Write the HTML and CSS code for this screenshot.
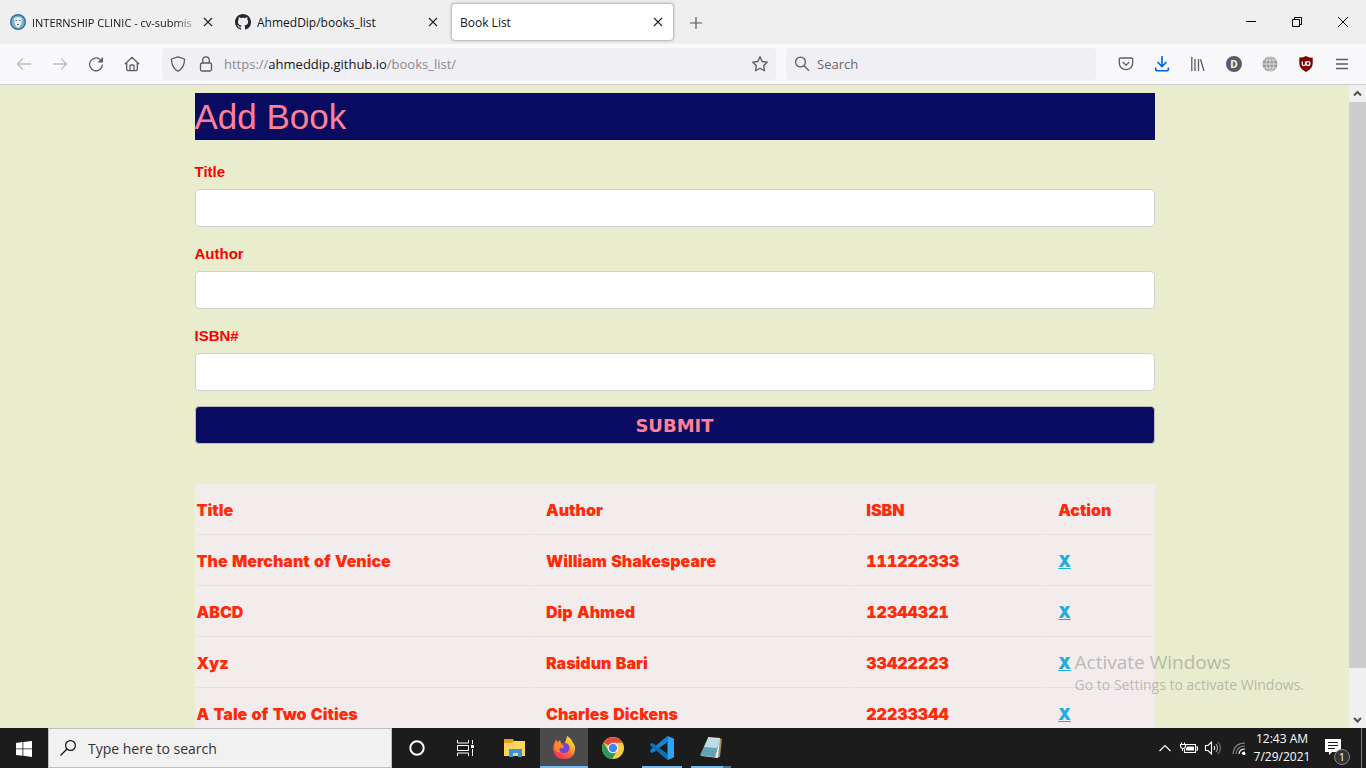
FILE: index.html
```html
<!DOCTYPE html>
<html lang="en">
<head>
<meta charset="utf-8">
<meta name="viewport" content="width=device-width, initial-scale=1">
<title>Book List</title>
<link rel="stylesheet" href="styles.css">
</head>
<body>
<div class="desktop">
  <header class="tabstrip">
    <div class="tab">
      <svg class="favicon" viewBox="0 0 16 16"><circle cx="8" cy="8" r="8" fill="#2f6f9a"/><circle cx="8" cy="8" r="6.6" fill="#78aeca"/><path d="M4 4.5Q8 1.500 12 4.500L11.500 9Q10.500 13 8 14Q5.500 13 4.500 9Z" fill="#e9eef0"/><path d="M5.500 6.500h1.500M9 6.500h1.500M7 10.500h2" stroke="#57656d"/></svg>
      <span class="tab-title tab-title-faded">INTERNSHIP CLINIC - cv-submis</span>
      <button class="tab-close" aria-label="Close tab"><svg viewBox="0 0 10 10"><path d="M1 1l8 8M9 1l-8 8" stroke="#222" stroke-width="1.1"/></svg></button>
    </div>
    <div class="tab">
      <svg class="favicon" viewBox="0 0 16 16"><path fill="#24292f" d="M8 0C3.580 0 0 3.580 0 8c0 3.540 2.290 6.530 5.470 7.590.4.070.55-.17.55-.38 0-.19-.010-.82-.010-1.490-2.010.37-2.530-.49-2.690-.94-.09-.23-.48-.94-.82-1.130-.28-.15-.68-.52-.010-.53.63-.010 1.080.58 1.230.82.72 1.210 1.870.87 2.330.66.070-.52.28-.87.51-1.070-1.780-.2-3.640-.89-3.640-3.950 0-.87.31-1.590.82-2.150-.08-.2-.36-1.020.08-2.120 0 0 .67-.21 2.200.82.64-.18 1.320-.27 2-.27s1.360.09 2 .27c1.530-1.040 2.200-.82 2.200-.82.44 1.100.16 1.920.08 2.120.51.56.82 1.270.82 2.150 0 3.070-1.870 3.750-3.650 3.950.29.25.54.73.54 1.480 0 1.070-.010 1.930-.010 2.200 0 .21.15.46.55.38A8 8 0 0 0 16 8c0-4.420-3.580-8-8-8z"/></svg>
      <span class="tab-title">AhmedDip/books_list</span>
      <button class="tab-close" aria-label="Close tab"><svg viewBox="0 0 10 10"><path d="M1 1l8 8M9 1l-8 8" stroke="#222" stroke-width="1.1"/></svg></button>
    </div>
    <div class="tab tab-active">
      <span class="tab-title">Book List</span>
      <button class="tab-close" aria-label="Close tab"><svg viewBox="0 0 10 10"><path d="M1 1l8 8M9 1l-8 8" stroke="#222" stroke-width="1.1"/></svg></button>
    </div>
    <button class="new-tab" aria-label="New tab"><svg width="12" height="12" viewBox="0 0 12 12"><path d="M6 0v12M0 6h12" stroke="#55555f" stroke-width="1.2"/></svg></button>
    <div class="window-controls">
      <button aria-label="Minimize"><svg width="10" height="10"><path d="M0 4.500h10" stroke="#000"/></svg></button>
      <button aria-label="Restore"><svg width="10" height="10" fill="none" stroke="#000"><path d="M.5 2.500h7v7h-7zM2.500 2.500v-2h7v7h-2"/></svg></button>
      <button aria-label="Close"><svg width="10" height="10"><path d="M0 0l10 10M10 0L0 10" stroke="#000"/></svg></button>
    </div>
  </header>

  <nav class="toolbar">
    <div class="tools">
      <button aria-label="Back"><svg class="faded" viewBox="0 0 16 16"><path d="M15 8H1.500M7 2.500L1.500 8 7 13.500"/></svg></button>
      <button aria-label="Forward"><svg class="faded" viewBox="0 0 16 16"><path d="M1 8h13.500M9 2.500L14.500 8 9 13.500"/></svg></button>
      <button aria-label="Reload"><svg viewBox="0 0 16 16"><path d="M14.400 8.500A6.400 6.400 0 1 1 12.300 3.600"/><path class="solid" d="M15 1v5.500H9.500z"/></svg></button>
      <button aria-label="Home"><svg viewBox="0 0 16 16"><path d="M.8 8.200L8 1.300l7.200 6.900M2.700 7v6.600q0 1.100 1.100 1.100h8.400q1.100 0 1.100-1.100V7M6 14.500V10q0-1 1-1h2q1 0 1 1v4.500"/></svg></button>
    </div>
    <div class="field address">
      <svg viewBox="0 0 16 16"><path d="M8 .8L14.500 3q.3 8-6.500 12.300Q1.200 11 1.500 3z" stroke-linejoin="round"/></svg>
      <svg viewBox="0 0 16 16"><rect x="2.500" y="7" width="11" height="8" rx="1.500"/><path d="M4.700 7V4.200a3.300 3.300 0 0 1 6.600 0V7"/></svg>
      <div class="url" role="textbox" aria-label="Address" contenteditable="true" spellcheck="false">https://<span class="host">ahmeddip.github.io</span>/books_list/</div>
      <svg viewBox="0 0 16 16"><path d="M8 .9l2.200 4.600 5 .7-3.600 3.500.9 5L8 12.300l-4.500 2.400.9-5L.8 6.200l5-.7z" stroke-linejoin="round"/></svg>
    </div>
    <div class="field websearch">
      <svg viewBox="0 0 16 16"><circle cx="6.500" cy="6" r="4.900"/><path d="M10 9.700l5 5"/></svg>
      <input type="text" aria-label="Web search" placeholder="Search">
    </div>
    <div class="tools">
      <button aria-label="Save to Pocket"><svg viewBox="0 0 16 16"><path d="M2.500 2h11q1.200 0 1.200 1.200V7a6.700 6.700 0 0 1-13.400 0V3.200Q1.300 2 2.500 2zM4.700 6L8 9.200 11.300 6"/></svg></button>
      <button aria-label="Downloads"><svg class="blue" viewBox="0 0 16 16"><path d="M8 0v10.500M3.500 6L8 10.500 12.500 6M1.700 11.500v2q0 1.200 1.200 1.200h10.200q1.200 0 1.200-1.200v-2"/></svg></button>
      <button aria-label="Library"><svg viewBox="0 0 16 16"><path d="M1.800 1v14M5 3v12M8.500 3v12M10.500 3.300L14 15"/></svg></button>
      <button aria-label="Account" class="account"><span>D</span></button>
      <button aria-label="Translate"><svg viewBox="0 0 16 16"><circle cx="8" cy="8" r="7.500" fill="#999" stroke="none"/><g stroke="#ddd" stroke-width="1"><ellipse cx="8" cy="8" rx="3.800" ry="7.500"/><path d="M8 0v16M0 8h16M1 4h14M1 12h14"/></g></svg></button>
      <button aria-label="uBlock Origin"><svg viewBox="0 0 16 16"><path d="M8 0l1.500.8q2.500 1 5.200.8v6q0 5-6.700 8.400Q1.300 12.600 1.300 7.600v-6Q5 1.800 8 0z" fill="#800000" stroke="none"/><path d="M4.300 5.500v2.700q0 1.400 1.600 1.400T7.500 8.200V5.500" stroke="#fff"/><circle cx="10" cy="7.600" r="1.900" stroke="#fff"/></svg></button>
      <button aria-label="Menu"><svg viewBox="0 0 16 16"><path d="M2 3.500h12M2 8h12M2 12.500h12"/></svg></button>
    </div>
  </nav>

  <div class="viewport">
    <main class="page">
      <div class="container">
        <h1>Add Book</h1>
        <form>
          <label for="title">Title</label>
          <input type="text" id="title">
          <label for="author">Author</label>
          <input type="text" id="author">
          <label for="isbn">ISBN#</label>
          <input type="text" id="isbn">
          <button type="button" class="submit">SUBMIT</button>
        </form>
        <table class="books">
          <colgroup><col class="col-title"><col class="col-author"><col class="col-isbn"><col class="col-action"></colgroup>
          <thead>
            <tr><th>Title</th><th>Author</th><th>ISBN</th><th>Action</th></tr>
          </thead>
          <tbody>
            <tr><td>The Merchant of Venice</td><td>William Shakespeare</td><td>111222333</td><td><a href="#">X</a></td></tr>
            <tr><td>ABCD</td><td>Dip Ahmed</td><td>12344321</td><td><a href="#">X</a></td></tr>
            <tr><td>Xyz</td><td>Rasidun Bari</td><td>33422223</td><td><a href="#">X</a></td></tr>
            <tr><td>A Tale of Two Cities</td><td>Charles Dickens</td><td>22233344</td><td><a href="#">X</a></td></tr>
          </tbody>
        </table>
      </div>
    </main>
    <div class="scrollbar">
      <svg viewBox="0 0 17 17"><path d="M5 10.500L8.500 7l3.500 3.500"/></svg>
      <div class="track"><div class="thumb"></div></div>
      <svg viewBox="0 0 17 17"><path d="M5 7l3.500 3.500L12 7"/></svg>
    </div>
    <div class="watermark">
      <p class="watermark-title">Activate Windows</p>
      <p>Go to Settings to activate Windows.</p>
    </div>
  </div>

  <footer class="taskbar">
    <button class="start" aria-label="Start"><svg width="16" height="16" viewBox="0 0 16 16"><path fill="#fff" d="M0 2l6.500-.9v6.400H0zM7.300 1L16 0v7.500H7.300zM0 8.300h6.500v6.400L0 13.900zM7.300 8.300H16V16l-8.700-1.200z"/></svg></button>
    <div class="task-search">
      <svg width="16" height="16" viewBox="0 0 16 16"><circle cx="10.500" cy="5.500" r="4.900"/><path d="M7 9L.5 15.500"/></svg>
      <input type="text" aria-label="Search Windows" placeholder="Type here to search">
    </div>
    <div class="apps">
      <button aria-label="Cortana"><svg viewBox="0 0 24 24"><circle cx="12" cy="12" r="6.700" fill="none" stroke="#fff" stroke-width="2"/></svg></button>
      <button aria-label="Task View"><svg viewBox="0 0 24 24"><path d="M3.500 4v3h11V4M3.500 20v-3h11v3M3.500 9.500h11v5h-11zM18.500 4v4M18.500 13v7" fill="none" stroke="#fff"/><path d="M17 9h3v3h-3z" fill="#fff"/></svg></button>
      <button aria-label="File Explorer"><svg viewBox="0 0 24 24"><path d="M1 3h9l1 2h11v15H1z" fill="#e3a21a"/><path d="M1 7h8l2-2h11v15H1z" fill="#fcd462"/><path d="M6 13h13v8h-4v-4h-5v4H6z" fill="#3b94d9"/></svg></button>
      <button class="app-active" aria-label="Firefox"><svg viewBox="0 0 24 24"><defs><linearGradient id="flame" x1="1" y1="0" x2=".2" y2="1"><stop offset="0" stop-color="#fff04a"/><stop offset=".35" stop-color="#ffb52b"/><stop offset=".65" stop-color="#ff5c3d"/><stop offset="1" stop-color="#f02873"/></linearGradient></defs><path d="M15 0q5 3 5.500 6.300Q23.500 9 23 14q-1 9-11 9T1 13q-.5-4 2-7l.5-2.500L6 6l2-2 1 3 3 1 2-4z" fill="url(#flame)"/><path d="M9.500 7.500Q17 5.500 17.500 12q-.2 5-5.500 5-5-.2-5-5l3 .8 2.500-1.800-3-.8z" fill="#7144d8"/><path d="M3 6q2 1 5 1l4 3q-1 2-4 2-2 2 1 4.500-5 .5-6.500-3.500z" fill="#ff8a1f"/></svg></button>
      <button aria-label="Chrome"><svg viewBox="0 0 24 24"><circle cx="12" cy="12" r="11" fill="#fbcb43"/><path d="M12 12L2.500 6.500A11 11 0 0 1 21.500 6.700H12z" fill="#dc4a3d"/><path d="M2.500 6.500a11 11 0 0 0 8.700 16.500L16 15l-8.500-.2z" fill="#279b59"/><circle cx="12" cy="12" r="5.300" fill="#fff"/><circle cx="12" cy="12" r="4.200" fill="#4285f4"/></svg></button>
      <button class="app-open" aria-label="Visual Studio Code"><svg viewBox="0 0 24 24"><path d="M.3 15.500l2 1.600L17.500 6V0L.3 14z" fill="#1286d4"/><path d="M.3 8.300l2-1.500L17.500 18v6L.3 9.700z" fill="#0871b8"/><path d="M17.500 0L24 2.700v18.600L17.500 24z" fill="#29a5f4"/></svg></button>
      <button class="app-open app-stacked" aria-label="Notepad"><svg viewBox="0 0 24 24"><path d="M20 2l3 1-2 18-4 1z" fill="#a78858"/><path d="M9 2l12 1-5 18-15-2z" fill="#5fa5b5"/><path d="M9 2l12 1-3 9-13-1z" fill="#b9dfe5"/><path d="M1 19l15 2 5-18-2 19-16-2z" fill="#e4eff0"/><path d="M9 2l12 1" stroke="#ddd" stroke-width="2"/></svg></button>
    </div>
    <div class="tray">
      <button aria-label="Show hidden icons"><svg width="24" height="18" viewBox="0 0 24 18"><path d="M6.500 12L12 6.500l5.500 5.500"/></svg></button>
      <button aria-label="Battery"><svg width="24" height="18" viewBox="0 0 24 18"><path d="M9 5.500h9.500v8H7.500V10M18.500 8h2v3h-2M5.500 12V9.500M3.500 5.500h5V7a2.500 2.500 0 0 1-5 0zM4.500 5.500v-2M7.500 5.500v-2"/><path d="M10 7.500h7v4h-8v-2z" fill="#fff" stroke="none"/></svg></button>
      <button aria-label="Volume"><svg width="24" height="18" viewBox="0 0 24 18"><path d="M4.500 6.500H7L10.500 3v12L7 11.500H4.500zM13 7q1.500 2 0 4"/><path d="M15 5q3 4 0 8" stroke="#aaa"/><path d="M17 3q5 6 0 12" stroke="#777"/></svg></button>
      <button class="wifi" aria-label="Network"><svg width="24" height="18" viewBox="0 0 24 18"><g stroke="#888"><path d="M6 15Q7 4 18 4M9 15q1-8 9-8"/></g><path d="M12 15q.5-5 6-5M15 15q.5-2 3-2"/><circle cx="17" cy="14.500" r="1" fill="#fff"/></svg></button>
      <div class="clock"><span>12:43 AM</span><span>7/29/2021</span></div>
      <button class="notices" aria-label="Notifications"><svg width="28" height="28" viewBox="0 0 28 28"><path d="M4 5h16v13h-9l-3 3v-3H4z" fill="#fff" stroke="none"/><path d="M7 8.500h10M7 11.500h10M7 14.500h7" stroke="#1c1c1c"/></svg><span class="badge">1</span></button>
      <span class="peek"></span>
    </div>
  </footer>
</div>
</body>
</html>
```
FILE: styles.css
```css
* { box-sizing: border-box; }

body { margin: 0; }

button {
  margin: 0;
  padding: 0;
  border: 0;
  background: none;
  color: inherit;
  font: inherit;
}

.desktop {
  display: flex;
  flex-direction: column;
  height: 100vh;
  overflow: hidden;
  font-family: "Open Sans", "Noto Sans", sans-serif;
  font-size: 12px;
}

/* Tabs */
.tabstrip {
  display: flex;
  flex: none;
  align-items: stretch;
  gap: 2px;
  height: 44px;
  padding-left: 1px;
  background: #efefef;
}

.tab {
  display: flex;
  flex: 0 1 223px;
  align-items: center;
  min-width: 0;
  margin: 3px 0;
  padding: 0 8px;
  border: 1px solid transparent;
  border-radius: 4px;
  color: #15141a;
}

.tab-active {
  border-color: #c0c0c6;
  background: #fff;
  box-shadow: 0 0 3px #bbb;
}

.favicon {
  flex: none;
  width: 16px;
  height: 16px;
  margin-right: 6px;
}

.tab-title {
  flex: 1;
  min-width: 0;
  overflow: hidden;
  white-space: nowrap;
}

.tab-title-faded {
  font-size: 11px;
  mask-image: linear-gradient(to right, #000 84%, transparent);
}

.tab-close {
  display: flex;
  flex: none;
  align-items: center;
  justify-content: center;
  width: 14px;
  height: 24px;
}

.tab-close svg { width: 10px; height: 10px; }

.new-tab { width: 40px; }

.new-tab svg { vertical-align: middle; }

.window-controls { display: flex; margin-left: auto; }

.window-controls button { width: 46px; }

/* Toolbar */
.toolbar {
  display: flex;
  flex: none;
  align-items: center;
  gap: 10px;
  height: 41px;
  padding: 0 6px;
  border-bottom: 1px solid #ccccd2;
  background: #f9f9fb;
}

.tools { display: flex; flex: none; }

.tools button {
  display: flex;
  align-items: center;
  justify-content: center;
  width: 36px;
  height: 32px;
}

.toolbar svg {
  flex: none;
  width: 16px;
  height: 16px;
  fill: none;
  stroke: #5b5b66;
  stroke-width: 1.3;
}

.toolbar .faded { stroke: #bcbcc2; }

.toolbar .blue { stroke: #0061e0; stroke-width: 1.6; }

.toolbar .solid { fill: #5b5b66; stroke: none; }

.account span {
  width: 16px;
  border-radius: 50%;
  background: #5b5b66;
  color: #fff;
  font-size: 10px;
  font-weight: 700;
  line-height: 16px;
}

.field {
  display: flex;
  align-items: center;
  height: 32px;
  padding: 0 8px;
  border-radius: 4px;
  background: #f0eff4;
  font-size: 13px;
}

.address { flex: 1; gap: 12px; margin-left: 2px; }

.url {
  flex: 1;
  margin-left: -2px;
  color: #8a8a92;
  white-space: nowrap;
}

.host { color: #15141a; }

.websearch { flex: 0 1 310px; gap: 7px; margin-right: 2px; }

.websearch input,
.task-search input {
  flex: 1;
  min-width: 0;
  padding: 0;
  border: 0;
  outline: 0;
  background: none;
  font: inherit;
}

.websearch input::placeholder { color: #66666f; }

/* Web page */
.viewport {
  position: relative;
  display: flex;
  flex: 1;
  min-height: 0;
  background: #e9edce;
}

.page {
  flex: 1;
  padding: 8px 0;
  overflow: hidden;
  font-family: "Liberation Sans", Arial, sans-serif;
  font-size: 15px;
}

.container {
  width: 80%;
  max-width: 960px;
  margin: 0 auto;
}

h1 {
  margin: 0 0 20px;
  background: #080b60;
  color: #ff8096;
  font-size: 35px;
  font-weight: 400;
  line-height: 47px;
}

.container label {
  display: block;
  margin-bottom: 5px;
  color: #f00;
  font-weight: 700;
  line-height: 24px;
}

.container input,
.submit {
  display: block;
  width: 100%;
  height: 38px;
  margin-bottom: 15px;
  border: 1px solid #d1d1d1;
  border-radius: 4px;
}

.container input {
  padding: 6px 10px;
  background: #fff;
  font: inherit;
}

.submit {
  margin-bottom: 40px;
  border-color: #bbb;
  background: #080b60;
  color: #ff8096;
  font-family: Verdana, "DejaVu Sans", sans-serif;
  font-size: 18px;
  font-weight: 700;
}

.books {
  width: 100%;
  border-spacing: 2px;
  table-layout: fixed;
  background: #f2ecec;
  color: #ff2a0a;
  font-family: "Arial Black", Inter, sans-serif;
  font-size: 16px;
  font-weight: 900;
  font-variant-numeric: tabular-nums;
  line-height: 24px;
}

.col-title { width: 35%; }
.col-author { width: 33.5%; }
.col-isbn { width: 20%; }
.col-action { width: 11.5%; }

.books th,
.books td {
  padding: 12px 15px;
  border-bottom: 1px solid #e1e1e1;
  font-weight: inherit;
  text-align: left;
}

.books th:first-child,
.books td:first-child { padding-left: 0; }

.books a { color: #1eaedb; }

.scrollbar {
  display: flex;
  flex: none;
  flex-direction: column;
  width: 17px;
  background: #f0f0f0;
}

.scrollbar svg {
  flex: none;
  height: 17px;
  fill: none;
  stroke: #505050;
  stroke-width: 2;
}

.track { flex: 1; }

.thumb { height: 93%; background: #cdcdcd; }

.watermark {
  position: absolute;
  right: 62px;
  bottom: 33px;
  color: rgba(130, 130, 130, .5);
  font-size: 14px;
  line-height: 20px;
  pointer-events: none;
}

.watermark p { margin: 0; }

.watermark .watermark-title { font-size: 19px; line-height: 26px; }

/* Taskbar */
.taskbar {
  display: flex;
  flex: none;
  height: 40px;
  background: #1c1c1c;
  color: #fff;
}

.start { width: 48px; }

.start svg { vertical-align: middle; }

.task-search {
  display: flex;
  flex: 0 1 344px;
  align-items: center;
  gap: 12px;
  padding: 0 11px;
  border: 1px solid #bdbdbd;
  background: #f1f1f1;
  font-size: 14px;
}

.task-search svg { fill: none; stroke: #111; stroke-width: 1.2; }

.task-search input::placeholder { color: #333; }

.apps { display: flex; gap: 1px; padding-left: 1px; }

.apps button {
  display: flex;
  position: relative;
  align-items: center;
  justify-content: center;
  width: 48px;
}

.apps svg { width: 24px; height: 24px; }

.app-active { box-shadow: inset 0 -2px #76b9ed; }

.apps .app-active { background: #4b4b4b; }

.app-open::after {
  position: absolute;
  right: 4px;
  bottom: 0;
  left: 4px;
  height: 2px;
  background: #76b9ed;
  content: "";
}

.app-stacked::after {
  background: linear-gradient(to right, #76b9ed 80%, #4a7597 80%);
}

.tray {
  display: flex;
  align-items: center;
  margin-left: auto;
}

.tray button { display: flex; }

.tray svg { fill: none; stroke: #fff; stroke-width: 1.1; }

.wifi { margin-left: 2px; }

.clock {
  display: flex;
  flex-direction: column;
  align-items: center;
  width: 62px;
  line-height: 18px;
  white-space: nowrap;
}

.notices { position: relative; margin: 0 12px 0 8px; }

.badge {
  position: absolute;
  right: -1px;
  bottom: -3px;
  width: 16px;
  border: 1px solid #888;
  border-radius: 50%;
  background: #333;
  font-size: 11px;
  line-height: 14px;
  text-align: center;
}

.peek {
  align-self: stretch;
  width: 5px;
  border-left: 1px solid #777;
}
```
